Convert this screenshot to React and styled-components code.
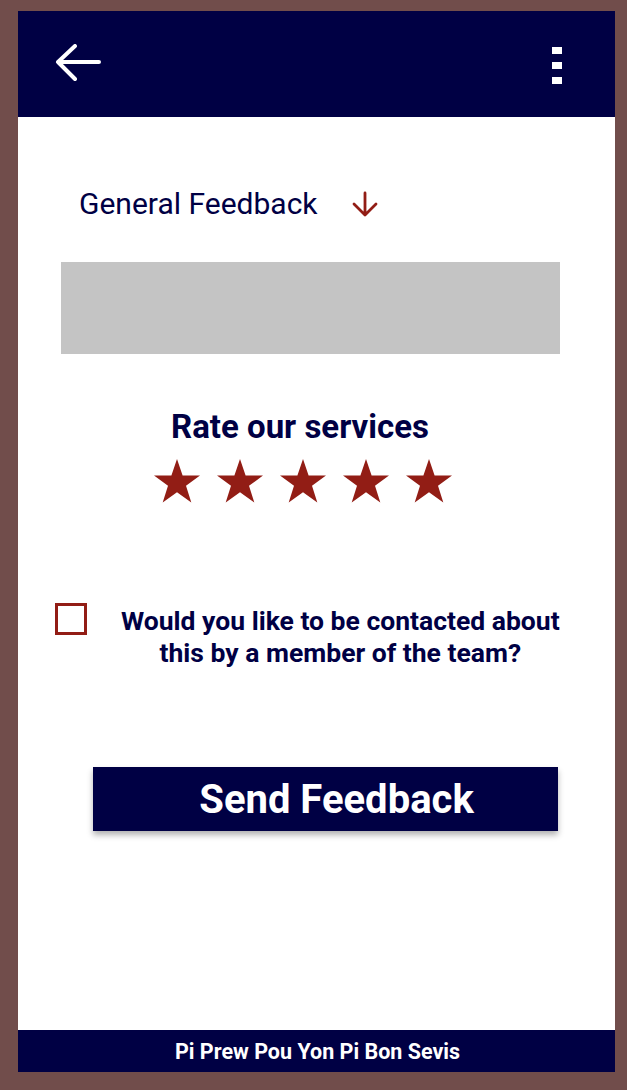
import React from "react";
import styled, { createGlobalStyle } from "styled-components";

const navy = "#000044";
const red = "#921d15";
const brown = "#714d4b";

const GlobalStyle = createGlobalStyle`
  html, body {
    margin: 0;
    padding: 0;
    background: ${brown};
    font-family: Roboto, "Liberation Sans", sans-serif;
  }
  * { box-sizing: border-box; }
`;

export default function App() {
  return (
    <>
      <GlobalStyle />
      <Page>
        <Frame>
          <Header>
            <IconButton aria-label="back">
              <svg width="46" height="38" viewBox="0 0 46 38" fill="none">
                <path
                  d="M44 18H3M20 2L3 18L20 35"
                  stroke="#fff"
                  strokeWidth="4"
                  strokeLinecap="round"
                  strokeLinejoin="round"
                />
              </svg>
            </IconButton>
            <Dots>
              <Dot />
              <Dot />
              <Dot />
            </Dots>
          </Header>

          <Main>
            <SelectRow>
              <SelectLabel>General Feedback</SelectLabel>
              <svg width="28" height="28" viewBox="0 0 28 28" fill="none">
                <path
                  d="M14 3V25M3 14L14 25L25 14"
                  stroke={red}
                  strokeWidth="2.8"
                  strokeLinecap="round"
                  strokeLinejoin="round"
                />
              </svg>
            </SelectRow>

            <TextArea />

            <RateTitle>Rate our services</RateTitle>
            <Stars>
              {[0, 1, 2, 3, 4].map((i) => (
                <svg key={i} width="48" height="46" viewBox="0 0 48 46">
                  <path
                    d="M24 1L29.6 17.6H47L33 27.8L38.3 44.5L24 34.2L9.7 44.5L15 27.8L1 17.6H18.4Z"
                    fill={red}
                  />
                </svg>
              ))}
            </Stars>

            <ContactRow>
              <Checkbox />
              <ContactText>
                Would you like to be contacted about
                <br />
                this by a member of the team?
              </ContactText>
            </ContactRow>

            <SendButton>Send Feedback</SendButton>
          </Main>

          <Footer>Pi Prew Pou Yon Pi Bon Sevis</Footer>
        </Frame>
      </Page>
    </>
  );
}

const Page = styled.div`
  height: 1090px;
  padding: 11px 12px 18px 18px;
  background: ${brown};
`;

const Frame = styled.div`
  height: 100%;
  display: flex;
  flex-direction: column;
  background: #fff;
`;

const Header = styled.header`
  height: 106px;
  flex-shrink: 0;
  background: ${navy};
  display: flex;
  align-items: center;
  justify-content: space-between;
  padding: 0 53px 0 37px;
`;

const IconButton = styled.div`
  display: flex;
  margin-top: -2px;
`;

const Dots = styled.div`
  display: flex;
  flex-direction: column;
  gap: 8px;
  margin-top: 2px;
`;

const Dot = styled.span`
  width: 10px;
  height: 7px;
  background: #fff;
`;

const Main = styled.main`
  flex: 1;
  display: flex;
  flex-direction: column;
  align-items: flex-start;
  padding: 69px 54px 0 43px;
`;

const SelectRow = styled.div`
  display: flex;
  align-items: center;
  gap: 33px;
  margin-left: 18px;
`;

const SelectLabel = styled.span`
  font-size: 30px;
  color: ${navy};
  line-height: 36px;
`;

const TextArea = styled.div`
  width: 499px;
  height: 92px;
  margin-top: 40px;
  background: #c4c4c4;
`;

const RateTitle = styled.h2`
  align-self: stretch;
  margin: 53px 0 0;
  font-size: 33px;
  font-weight: 700;
  color: ${navy};
  text-align: center;
  line-height: 40px;
  padding-right: 22px;
`;

const Stars = styled.div`
  align-self: stretch;
  display: flex;
  justify-content: center;
  gap: 15px;
  margin-top: 11px;
  padding-right: 16px;
`;

const ContactRow = styled.div`
  display: flex;
  align-items: flex-start;
  gap: 34px;
  margin-top: 101px;
  margin-left: -6px;
`;

const Checkbox = styled.span`
  width: 32px;
  height: 32px;
  border: 3px solid ${red};
  flex-shrink: 0;
  margin-top: -2px;
`;

const ContactText = styled.p`
  margin: 0;
  font-size: 26.5px;
  font-weight: 700;
  line-height: 32px;
  color: ${navy};
  text-align: center;
`;

const SendButton = styled.button`
  margin: 98px 0 0 32px;
  width: 465px;
  height: 64px;
  border: none;
  background: ${navy};
  color: #fff;
  font-family: Roboto, "Liberation Sans", sans-serif;
  font-size: 40px;
  font-weight: 700;
  padding: 0 0 0 22px;
  box-shadow: 0 4px 6px rgba(0, 0, 0, 0.3);
`;

const Footer = styled.footer`
  height: 42px;
  flex-shrink: 0;
  background: ${navy};
  color: #fff;
  font-size: 21.5px;
  font-weight: 700;
  display: flex;
  align-items: center;
  justify-content: center;
  padding-left: 2px;
`;
